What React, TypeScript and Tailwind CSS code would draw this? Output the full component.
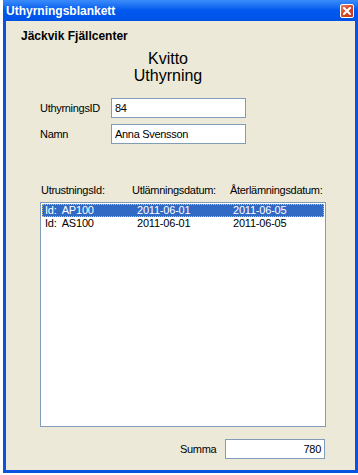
import React from 'react';

const rows = [
  { id: 'AP100', out: '2011-06-01', back: '2011-06-05', selected: true },
  { id: 'AS100', out: '2011-06-01', back: '2011-06-05', selected: false },
];

const CloseButton: React.FC = () => (
  <div className="w-[14px] h-[14px] rounded-[2px] border border-white bg-gradient-to-br from-[#E87A5C] via-[#D9482A] to-[#C1381A] flex items-center justify-center">
    <svg width="8" height="8" viewBox="0 0 8 8">
      <path d="M1 1 L7 7 M7 1 L1 7" stroke="white" strokeWidth="2" strokeLinecap="square" />
    </svg>
  </div>
);

const TextBox: React.FC<{ value: string; className?: string; right?: boolean }> = ({ value, className = '', right = false }) => (
  <div
    className={`h-[20px] bg-white border border-[#7F9DB9] flex items-center px-[3px] text-[11px] tracking-[-0.3px] text-black ${right ? 'justify-end' : ''} ${className}`}
  >
    {value}
  </div>
);

export default function App() {
  return (
    <div className="w-[358px] h-[475px] bg-white font-['Liberation_Sans',Arial,sans-serif] overflow-hidden">
      <div className="ml-[3px] w-[355px] h-[473px] flex flex-col">
        {/* title bar */}
        <div className="h-[21px] bg-gradient-to-b from-[#3A8CFA] via-[#0058EE] to-[#0052E6] flex items-center justify-between pl-[3px] pr-[4px]">
          <span className="text-white font-bold text-[12px] leading-none">Uthyrningsblankett</span>
          <CloseButton />
        </div>

        {/* client area */}
        <div className="flex-1 border-l-[3px] border-r-[3px] border-b-[3px] border-[#0A52E0] bg-[#ECE9D8] flex flex-col text-black">
          <div className="mt-[8px] ml-[15px] text-[12px] font-bold leading-[14px]">Jäckvik Fjällcenter</div>

          <div className="mt-[7px] w-[324px] text-center text-[16px] leading-[17px]">
            <div>Kvitto</div>
            <div>Uthyrning</div>
          </div>

          <div className="mt-[14px] ml-[34px] flex flex-col gap-[6px] text-[11px] tracking-[-0.3px]">
            <div className="flex items-center">
              <span className="w-[71px]">UthyrningsID</span>
              <TextBox value="84" className="w-[135px]" />
            </div>
            <div className="flex items-center">
              <span className="w-[71px]">Namn</span>
              <TextBox value="Anna Svensson" className="w-[135px]" />
            </div>
          </div>

          <div className="mt-[40px] ml-[35px] flex text-[11px] tracking-[-0.3px] leading-[13px]">
            <span className="w-[91px]">UtrustningsId:</span>
            <span className="w-[98px]">Utlämningsdatum:</span>
            <span>Återlämningsdatum:</span>
          </div>

          <div className="mt-[5px] ml-[34px] w-[286px] h-[225px] bg-white border border-[#7F9DB9] p-[1px]">
            {rows.map((r) => (
              <div
                key={r.id}
                className={`h-[13px] flex items-center text-[11px] tracking-[-0.2px] leading-none ${
                  r.selected ? 'bg-[#316AC5] text-white border border-dotted border-[#D8C46A]' : 'border border-transparent'
                }`}
              >
                <span className="w-[94px] pl-[2px] whitespace-pre">{`Id:  ${r.id}`}</span>
                <span className="w-[96px]">{r.out}</span>
                <span>{r.back}</span>
              </div>
            ))}
          </div>

          <div className="mt-[12px] ml-[174px] flex items-center text-[11px] tracking-[-0.3px]">
            <span className="w-[45px]">Summa</span>
            <TextBox value="780" className="w-[100px]" right />
          </div>
        </div>
      </div>
    </div>
  );
}
